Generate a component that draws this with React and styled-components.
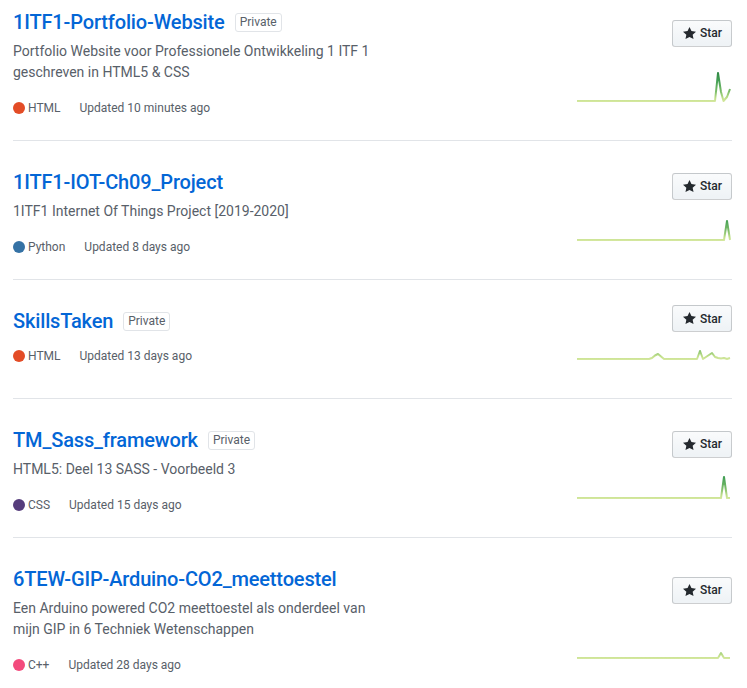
import React from "react";
import styled, { createGlobalStyle } from "styled-components";

const GlobalStyle = createGlobalStyle`
  html, body {
    margin: 0;
    padding: 0;
    background: #ffffff;
    overflow: hidden;
  }
  body {
    font-family: Roboto, "Liberation Sans", sans-serif;
    color: #24292e;
  }
`;

const List = styled.ul`
  list-style: none;
  margin: -19px 15px 0 13px;
  padding: 0;
`;

const Row = styled.li`
  display: flex;
  padding: 24px 0 23px;
  border-bottom: 1px solid #e1e4e8;
`;

const Main = styled.div`
  flex: 1;
  min-width: 0;
  display: flex;
  flex-direction: column;
`;

const TitleLine = styled.div`
  display: flex;
  align-items: center;
  height: 32px;
  padding-top: 1px;
  margin-bottom: 1px;
`;

const RepoName = styled.a`
  font-size: 20px;
  font-weight: 500;
  letter-spacing: -0.15px;
  line-height: 32px;
  color: #0366d6;
  text-decoration: none;
`;

const Label = styled.span`
  margin-left: 10px;
  padding: 0 4px;
  font-size: 12px;
  line-height: 17px;
  color: #586069;
  border: 1px solid #e1e4e8;
  border-radius: 3px;
`;

const Description = styled.p`
  margin: 2px 0 6px;
  max-width: 380px;
  font-size: 14px;
  line-height: 21px;
  color: #586069;
`;

const Meta = styled.div`
  display: flex;
  align-items: center;
  margin-top: 9px;
  font-size: 12px;
  line-height: 18px;
  color: #586069;
  ${Description} + & {
    margin-top: 10px;
  }
`;

const Language = styled.span`
  display: inline-flex;
  align-items: center;
  margin-right: 19px;
`;

const LangDot = styled.span`
  width: 12px;
  height: 12px;
  border-radius: 50%;
  margin-right: 3px;
  background: ${(p) => p.$color};
`;

const Side = styled.div`
  width: 155px;
  display: grid;
  grid-template-rows: 1fr auto 2fr auto;
  justify-items: end;
  padding: 1px 0 15px;
`;

const StarButton = styled.button`
  grid-row: 2;
  display: inline-flex;
  align-items: center;
  gap: 4px;
  height: 27px;
  padding: 0 9px 0 10px;
  font-family: inherit;
  font-size: 12px;
  font-weight: 500;
  color: #24292e;
  background: linear-gradient(-180deg, #fafbfc 0%, #eff3f6 90%);
  border: 1px solid rgba(27, 31, 35, 0.2);
  border-radius: 3px;
  cursor: pointer;
`;

const Spark = styled.svg`
  grid-row: 4;
  display: block;
  margin-top: -2px;
`;

const StarIcon = () => (
  <svg width="13" height="15" viewBox="0 0 14 16" aria-hidden="true">
    <path
      fill="#24292e"
      d="M14 6l-4.9-.64L7 1 4.9 5.36 0 6l3.6 3.26L2.67 14 7 11.67 11.33 14l-.93-4.74L14 6z"
    />
  </svg>
);

const flat = (to) => {
  const pts = [];
  for (let x = 0; x <= to; x += 3) pts.push([x, 29]);
  return pts;
};

const Sparkline = ({ id, points }) => (
  <Spark width="155" height="30" viewBox="0 0 155 30">
    <defs>
      <linearGradient id={id} gradientUnits="userSpaceOnUse" x1="0" y1="30" x2="0" y2="0">
        <stop offset="0%" stopColor="#d6e8a0" />
        <stop offset="12%" stopColor="#c2e08c" />
        <stop offset="35%" stopColor="#7dbd6a" />
        <stop offset="70%" stopColor="#44a055" />
        <stop offset="100%" stopColor="#2f8744" />
      </linearGradient>
    </defs>
    <polyline
      points={points.map((p) => p.join(",")).join(" ")}
      fill="none"
      stroke={`url(#${id})`}
      strokeWidth="2"
      strokeLinejoin="round"
    />
  </Spark>
);

const repos = [
  {
    name: "1ITF1-Portfolio-Website",
    isPrivate: true,
    description: "Portfolio Website voor Professionele Ontwikkeling 1 ITF 1 geschreven in HTML5 & CSS",
    language: "HTML",
    color: "#e34c26",
    updated: "Updated 10 minutes ago",
    spark: [...flat(138), [141, 1], [144, 20], [146.5, 29], [150, 25], [153, 17]],
  },
  {
    name: "1ITF1-IOT-Ch09_Project",
    isPrivate: false,
    description: "1ITF1 Internet Of Things Project [2019-2020]",
    language: "Python",
    color: "#3572A5",
    updated: "Updated 8 days ago",
    spark: [...flat(147), [150, 10], [153, 29]],
  },
  {
    name: "SkillsTaken",
    isPrivate: true,
    description: "",
    language: "HTML",
    color: "#e34c26",
    updated: "Updated 13 days ago",
    spark: [
      ...flat(72),
      [75, 28],
      [78, 25.5],
      [81, 24],
      [84, 26.5],
      [87, 29],
      ...flat(120).filter((p) => p[0] > 87),
      [123, 21],
      [126, 29],
      [129, 27],
      [132, 25],
      [135, 23],
      [138, 27],
      [141, 28],
      [144, 28.5],
      [147, 28],
      [150, 29],
      [153, 28],
    ],
  },
  {
    name: "TM_Sass_framework",
    isPrivate: true,
    description: "HTML5: Deel 13 SASS - Voorbeeld 3",
    language: "CSS",
    color: "#563d7c",
    updated: "Updated 15 days ago",
    spark: [...flat(144), [147, 8], [150, 29], [153, 29]],
  },
  {
    name: "6TEW-GIP-Arduino-CO2_meettoestel",
    isPrivate: false,
    description: "Een Arduino powered CO2 meettoestel als onderdeel van mijn GIP in 6 Techniek Wetenschappen",
    language: "C++",
    color: "#f34b7d",
    updated: "Updated 28 days ago",
    spark: [...flat(141), [144, 24], [147, 29], [150, 29], [153, 29]],
  },
];

export default function App() {
  return (
    <>
      <GlobalStyle />
      <List>
        {repos.map((r, i) => (
          <Row key={r.name}>
            <Main>
              <TitleLine>
                <RepoName href="#">{r.name}</RepoName>
                {r.isPrivate && <Label>Private</Label>}
              </TitleLine>
              {r.description && <Description>{r.description}</Description>}
              <Meta>
                <Language>
                  <LangDot $color={r.color} />
                  {r.language}
                </Language>
                {r.updated}
              </Meta>
            </Main>
            <Side>
              <StarButton type="button">
                <StarIcon />
                Star
              </StarButton>
              <Sparkline id={`spark-${i}`} points={r.spark} />
            </Side>
          </Row>
        ))}
      </List>
    </>
  );
}
